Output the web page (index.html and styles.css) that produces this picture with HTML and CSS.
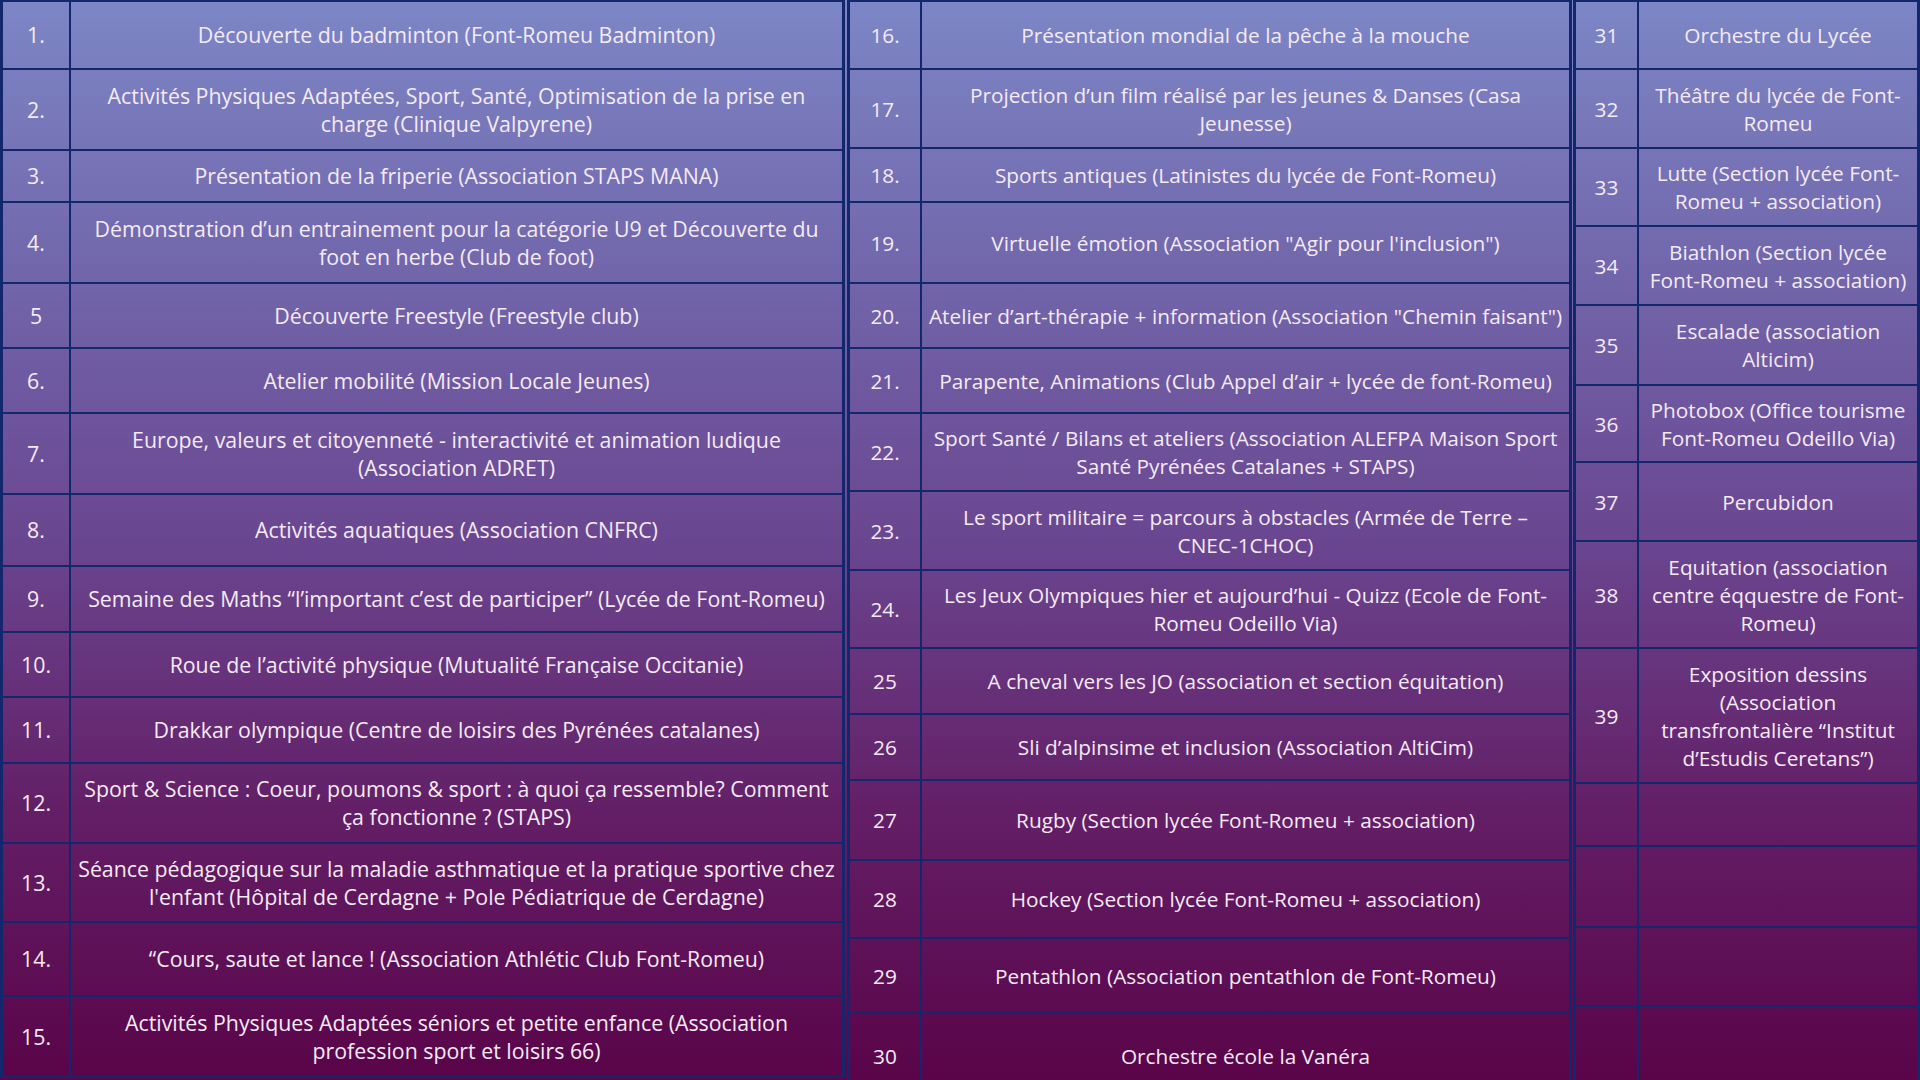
FILE: index.html
```html
<!DOCTYPE html>
<html lang="fr">
<head>
<meta charset="utf-8">
<title>Programme des ateliers</title>
<link rel="stylesheet" href="styles.css">
</head>
<body>
<main class="page">
  <section class="board board-1">
    <div class="num">1.</div><div class="txt">Découverte du badminton (Font-Romeu Badminton)</div>
    <div class="num">2.</div><div class="txt">Activités Physiques Adaptées, Sport, Santé, Optimisation de la prise en<br>charge (Clinique Valpyrene)</div>
    <div class="num">3.</div><div class="txt">Présentation de la friperie (Association STAPS MANA)</div>
    <div class="num">4.</div><div class="txt">Démonstration d’un entrainement pour la catégorie U9 et Découverte du<br>foot en herbe (Club de foot)</div>
    <div class="num">5</div><div class="txt">Découverte Freestyle (Freestyle club)</div>
    <div class="num">6.</div><div class="txt">Atelier mobilité (Mission Locale Jeunes)</div>
    <div class="num">7.</div><div class="txt">Europe, valeurs et citoyenneté - interactivité et animation ludique<br>(Association ADRET)</div>
    <div class="num">8.</div><div class="txt">Activités aquatiques (Association CNFRC)</div>
    <div class="num">9.</div><div class="txt">Semaine des Maths “l’important c’est de participer” (Lycée de Font-Romeu)</div>
    <div class="num">10.</div><div class="txt">Roue de l’activité physique (Mutualité Française Occitanie)</div>
    <div class="num">11.</div><div class="txt">Drakkar olympique (Centre de loisirs des Pyrénées catalanes)</div>
    <div class="num">12.</div><div class="txt">Sport &amp; Science : Coeur, poumons &amp; sport : à quoi ça ressemble? Comment<br>ça fonctionne ? (STAPS)</div>
    <div class="num">13.</div><div class="txt">Séance pédagogique sur la maladie asthmatique et la pratique sportive chez<br>l'enfant (Hôpital de Cerdagne + Pole Pédiatrique de Cerdagne)</div>
    <div class="num">14.</div><div class="txt">“Cours, saute et lance ! (Association Athlétic Club Font-Romeu)</div>
    <div class="num">15.</div><div class="txt">Activités Physiques Adaptées séniors et petite enfance (Association<br>profession sport et loisirs 66)</div>
  </section>
  <section class="board board-2">
    <div class="num">16.</div><div class="txt">Présentation mondial de la pêche à la mouche</div>
    <div class="num">17.</div><div class="txt">Projection d’un film réalisé par les jeunes &amp; Danses (Casa<br>Jeunesse)</div>
    <div class="num">18.</div><div class="txt">Sports antiques (Latinistes du lycée de Font-Romeu)</div>
    <div class="num">19.</div><div class="txt">Virtuelle émotion (Association "Agir pour l'inclusion")</div>
    <div class="num">20.</div><div class="txt">Atelier d’art-thérapie + information (Association "Chemin faisant")</div>
    <div class="num">21.</div><div class="txt">Parapente, Animations (Club Appel d’air + lycée de font-Romeu)</div>
    <div class="num">22.</div><div class="txt">Sport Santé / Bilans et ateliers (Association ALEFPA Maison Sport<br>Santé Pyrénées Catalanes + STAPS)</div>
    <div class="num">23.</div><div class="txt">Le sport militaire = parcours à obstacles (Armée de Terre –<br>CNEC-1CHOC)</div>
    <div class="num">24.</div><div class="txt">Les Jeux Olympiques hier et aujourd’hui - Quizz (Ecole de Font-<br>Romeu Odeillo Via)</div>
    <div class="num">25</div><div class="txt">A cheval vers les JO (association et section équitation)</div>
    <div class="num">26</div><div class="txt">Sli d’alpinsime et inclusion (Association AltiCim)</div>
    <div class="num">27</div><div class="txt">Rugby (Section lycée Font-Romeu + association)</div>
    <div class="num">28</div><div class="txt">Hockey (Section lycée Font-Romeu + association)</div>
    <div class="num">29</div><div class="txt">Pentathlon (Association pentathlon de Font-Romeu)</div>
    <div class="num">30</div><div class="txt">Orchestre école la Vanéra</div>
  </section>
  <section class="board board-3">
    <div class="num">31</div><div class="txt">Orchestre du Lycée</div>
    <div class="num">32</div><div class="txt">Théâtre du lycée de Font-<br>Romeu</div>
    <div class="num">33</div><div class="txt">Lutte (Section lycée Font-<br>Romeu + association)</div>
    <div class="num">34</div><div class="txt">Biathlon (Section lycée<br>Font-Romeu + association)</div>
    <div class="num">35</div><div class="txt">Escalade (association<br>Alticim)</div>
    <div class="num">36</div><div class="txt">Photobox (Office tourisme<br>Font-Romeu Odeillo Via)</div>
    <div class="num">37</div><div class="txt">Percubidon</div>
    <div class="num">38</div><div class="txt">Equitation (association<br>centre éqquestre de Font-<br>Romeu)</div>
    <div class="num">39</div><div class="txt">Exposition dessins<br>(Association<br>transfrontalière “Institut<br>d’Estudis Ceretans”)</div>
    <div class="num"></div><div class="txt"></div>
    <div class="num"></div><div class="txt"></div>
    <div class="num"></div><div class="txt"></div>
    <div class="num"></div><div class="txt"></div>
  </section>
</main>
</body>
</html>
```
FILE: styles.css
```css
html, body {
  margin: 0;
  padding: 0;
}

body {
  width: 1920px;
  height: 1080px;
  overflow: hidden;
  background: linear-gradient(180deg, #7c86c6 0%, #7060a6 30%, #6a4690 50%, #631f66 75%, #5a0449 100%);
  font-family: "Open Sans", "Noto Sans", sans-serif;
  font-size: 21.33px;
  line-height: 28px;
  color: #f4eaf4;
}

.page {
  display: flex;
  align-items: flex-start;
  height: 1080px;
}

.board {
  display: grid;
  box-sizing: border-box;
  border-top: 2px solid #13286c;
  border-left: 3px solid #13286c;
  flex: none;
}

.board-1 {
  width: 845px;
  margin-right: 2px;
  grid-template-columns: 68px 1fr;
  grid-template-rows: 68px 81px 52px 81px 65px 65px 81px 72px 66px 65px 66px 80px 79px 74px 81px;
}

.board-2 {
  width: 725px;
  margin-right: 1px;
  font-size: 20.8px;
  grid-template-columns: 72px 1fr;
  grid-template-rows: 68px 79px 54px 81px 65px 65px 78px 79px 78px 66px 66px 80px 78px 75px 86px;
}

.board-3 {
  width: 347px;
  font-size: 20.8px;
  grid-template-columns: 63px 1fr;
  grid-template-rows: 68px 79px 78px 79px 80px 77px 79px 107px 135px 63px 81px 79px 80px;
}

.num,
.txt {
  box-sizing: border-box;
  display: flex;
  align-items: center;
  justify-content: center;
  text-align: center;
  border-right: 2px solid #13286c;
  border-bottom: 2px solid #13286c;
}

.txt {
  padding: 0 2px;
  white-space: nowrap;
  border-right-width: 3px;
}
```
